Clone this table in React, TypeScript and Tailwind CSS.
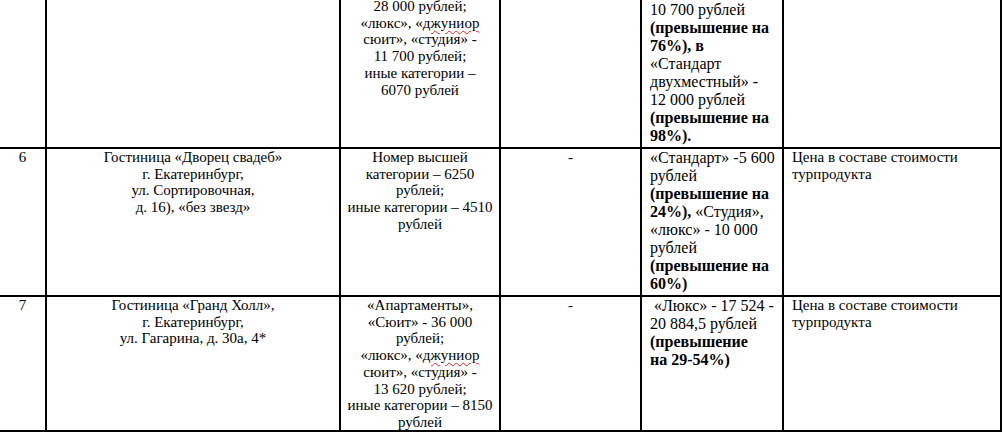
import React from "react";

const cell = "border-r-2 border-b-2 border-black overflow-hidden";

function Wavy({ children }: { children: React.ReactNode }) {
  return <span className="underline decoration-wavy decoration-[#e0201b] decoration-1 underline-offset-2">{children}</span>;
}

function Lines({ lines, className = "" }: { lines: React.ReactNode[]; className?: string }) {
  return (
    <div className={className}>
      {lines.map((l, i) => (
        <div key={i} className="whitespace-pre">
          {l}
        </div>
      ))}
    </div>
  );
}

const base = "text-[15px] leading-[16.7px]";
const price = "text-[16px] leading-[18px] pl-[8px]";

export default function App() {
  return (
    <div className="font-['Liberation_Serif','Times_New_Roman',serif] text-black w-[1003px] h-[432px] overflow-hidden bg-white">
      <div className="grid grid-cols-[47px_294px_160px_141px_142px_218px] grid-rows-[149px_148px_135px]">
        {/* previous row, cut at the top */}
        <div className={cell} />
        <div className={cell} />
        <div className={cell}>
          <Lines
            className={`${base} text-center mt-[-2px]`}
            lines={[
              "28 000 рублей;",
              <>«люкс», «<Wavy>джуниор</Wavy></>,
              "сюит», «студия» -",
              "11 700 рублей;",
              "иные категории –",
              "6070 рублей",
            ]}
          />
        </div>
        <div className={cell} />
        <div className={cell}>
          <Lines
            className={`${price} pt-[1px]`}
            lines={[
              "10 700 рублей",
              <b>(превышение на</b>,
              <b>76%), в</b>,
              "«Стандарт",
              "двухместный» -",
              "12 000 рублей",
              <b>(превышение на</b>,
              <b>98%).</b>,
            ]}
          />
        </div>
        <div className={cell} />

        {/* row 6 */}
        <div className={cell}>
          <div className={`${base} text-center`}>6</div>
        </div>
        <div className={cell}>
          <Lines
            className={`${base} text-center`}
            lines={["Гостиница «Дворец свадеб»", "г. Екатеринбург,", "ул. Сортировочная,", "д. 16), «без звезд»"]}
          />
        </div>
        <div className={cell}>
          <Lines
            className={`${base} text-center`}
            lines={["Номер высшей", "категории – 6250", "рублей;", "иные категории – 4510", "рублей"]}
          />
        </div>
        <div className={cell}>
          <div className={`${base} text-center`}>-</div>
        </div>
        <div className={cell}>
          <Lines
            className={price}
            lines={[
              "«Стандарт» -5 600",
              "рублей",
              <b>(превышение на</b>,
              <><b>24%),</b> «Студия»,</>,
              "«люкс» - 10 000",
              "рублей",
              <b>(превышение на</b>,
              <b>60%)</b>,
            ]}
          />
        </div>
        <div className={cell}>
          <Lines className={`${base} pl-[8px]`} lines={["Цена в составе стоимости", "турпродукта"]} />
        </div>

        {/* row 7 */}
        <div className={cell}>
          <div className={`${base} text-center`}>7</div>
        </div>
        <div className={cell}>
          <Lines
            className={`${base} text-center`}
            lines={["Гостиница «Гранд Холл»,", "г. Екатеринбург,", "ул. Гагарина, д. 30а, 4*"]}
          />
        </div>
        <div className={cell}>
          <Lines
            className={`${base} text-center`}
            lines={[
              "«Апартаменты»,",
              "«Сюит» - 36 000",
              "рублей;",
              <>«люкс», «<Wavy>джуниор</Wavy></>,
              "сюит», «студия» -",
              "13 620 рублей;",
              "иные категории – 8150",
              "рублей",
            ]}
          />
        </div>
        <div className={cell}>
          <div className={`${base} text-center`}>-</div>
        </div>
        <div className={cell}>
          <Lines
            className={price}
            lines={[" «Люкс» - 17 524 -", "20 884,5 рублей", <b>(превышение</b>, <b>на 29-54%)</b>]}
          />
        </div>
        <div className={cell}>
          <Lines className={`${base} pl-[8px]`} lines={["Цена в составе стоимости", "турпродукта"]} />
        </div>
      </div>
    </div>
  );
}
